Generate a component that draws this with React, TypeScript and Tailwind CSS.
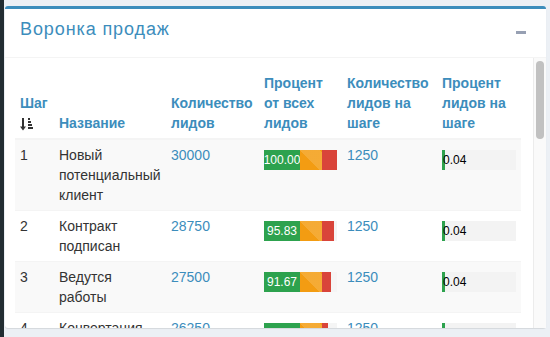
import { ReactNode } from 'react'

interface FunnelRow {
  step: number
  name: string[]
  total: number
  percent: string
  red: number
  stepLeads: number
  stepPercent: string
}

const rows: FunnelRow[] = [
  { step: 1, name: ['Новый', 'потенциальный', 'клиент'], total: 30000, percent: '100.00', red: 15, stepLeads: 1250, stepPercent: '0.04' },
  { step: 2, name: ['Контракт', 'подписан'], total: 28750, percent: '95.83', red: 12, stepLeads: 1250, stepPercent: '0.04' },
  { step: 3, name: ['Ведутся', 'работы'], total: 27500, percent: '91.67', red: 9, stepLeads: 1250, stepPercent: '0.04' },
  { step: 4, name: ['Конвертация'], total: 26250, percent: '87.50', red: 6, stepLeads: 1250, stepPercent: '0.04' },
]

function SortIcon() {
  return (
    <svg width="13" height="14" viewBox="0 0 13 14" className="inline-block">
      <rect x="2" y="1" width="2" height="9" fill="#333" />
      <path d="M0 9.5 L6 9.5 L3 13.5 Z" fill="#333" />
      <rect x="8" y="1" width="2" height="2" fill="#333" />
      <rect x="8" y="4" width="3" height="2" fill="#333" />
      <rect x="8" y="7" width="4" height="2" fill="#333" />
      <rect x="8" y="10" width="5" height="2" fill="#333" />
    </svg>
  )
}

function Th({ children }: { children: ReactNode }) {
  return (
    <th className="align-bottom text-left font-bold text-[#3c8dbc] px-[5px] py-[5px] border-b-2 border-[#f4f4f4]">
      {children}
    </th>
  )
}

function StackedBar({ percent, red }: { percent: string; red: number }) {
  return (
    <div className="mt-[5px] flex h-[20px] w-[73px] bg-[#f5f5f5]">
      <div className="w-[36px] bg-[#2da24e] text-white text-[12px] leading-[20px] whitespace-nowrap flex justify-center">
        {percent}
      </div>
      <div className="w-[22px] bg-[#f39c12] bg-[linear-gradient(45deg,rgba(255,255,255,.15)_25%,transparent_25%,transparent_50%,rgba(255,255,255,.15)_50%,rgba(255,255,255,.15)_75%,transparent_75%,transparent)] bg-[length:40px_40px]" />
      <div className="bg-[#d9443a]" style={{ width: red }} />
    </div>
  )
}

function StepBar({ value }: { value: string }) {
  return (
    <div className="mt-[5px] relative h-[20px] w-[74px] bg-[#f3f3f3]">
      <div className="absolute left-0 top-0 h-full w-[3px] bg-[#2da24e]" />
      <span className="absolute left-[1px] top-0 text-[12px] leading-[20px] text-black">{value}</span>
    </div>
  )
}

export default function App() {
  return (
    <div className="flex h-[337px] w-[550px] bg-[#ecf0f5] font-['Liberation_Sans',Arial,sans-serif] text-[14px] leading-[20px] text-[#333]">
      <div className="w-[4px] bg-[#222d32]" />
      <div className="flex-1 pl-[1px] pt-[6px] pr-[4px] pb-[9px]">
        <div className="flex h-full flex-col rounded-[3px] border-t-[3px] border-[#3c8dbc] bg-white shadow-[0_1px_1px_rgba(0,0,0,0.1)]">
          {/* Header */}
          <div className="flex h-[49px] items-start justify-between border-b border-[#f4f4f4] pl-[15px] pr-[20px] pt-[11px]">
            <h3 className="text-[18px] leading-[18px] tracking-[0.9px] text-[#3c8dbc]">Воронка продаж</h3>
            <div className="mt-[11px] h-[3px] w-[10px] bg-[#97a0b3]" />
          </div>

          {/* Body */}
          <div className="flex min-h-0 flex-1">
            <div className="flex-1 overflow-hidden p-[10px] pr-0">
              <table className="w-[506px] table-fixed border-collapse">
                <colgroup>
                  <col className="w-[39px]" />
                  <col className="w-[112px]" />
                  <col className="w-[93px]" />
                  <col className="w-[83px]" />
                  <col className="w-[95px]" />
                  <col className="w-[84px]" />
                </colgroup>
                <thead>
                  <tr>
                    <Th>
                      Шаг
                      <br />
                      <SortIcon />
                    </Th>
                    <Th>Название</Th>
                    <Th>
                      Количество
                      <br />
                      лидов
                    </Th>
                    <Th>
                      Процент
                      <br />
                      от всех
                      <br />
                      лидов
                    </Th>
                    <Th>
                      Количество
                      <br />
                      лидов на
                      <br />
                      шаге
                    </Th>
                    <Th>
                      Процент
                      <br />
                      лидов на
                      <br />
                      шаге
                    </Th>
                  </tr>
                </thead>
                <tbody>
                  {rows.map((r, i) => (
                    <tr key={r.step} className={`border-b border-[#f4f4f4] ${i % 2 === 0 ? 'bg-[#f9f9f9]' : 'bg-white'}`}>
                      <td className="align-top p-[5px]">{r.step}</td>
                      <td className="align-top p-[5px]">
                        {r.name.map((n) => (
                          <div key={n}>{n}</div>
                        ))}
                      </td>
                      <td className="align-top p-[5px] text-[#3c8dbc]">{r.total}</td>
                      <td className="align-top p-[5px]">
                        <StackedBar percent={r.percent} red={r.red} />
                      </td>
                      <td className="align-top p-[5px] text-[#3c8dbc]">{r.stepLeads}</td>
                      <td className="align-top p-[5px]">
                        <StepBar value={r.stepPercent} />
                      </td>
                    </tr>
                  ))}
                </tbody>
              </table>
            </div>

            {/* Scrollbar */}
            <div className="w-[13px] border-l border-[#ececec] bg-[#fafafa] pl-[2px] pt-[3px]">
              <div className="h-[78px] w-[8px] rounded-full bg-[#c1c1c1]" />
            </div>
          </div>
        </div>
      </div>
    </div>
  )
}
